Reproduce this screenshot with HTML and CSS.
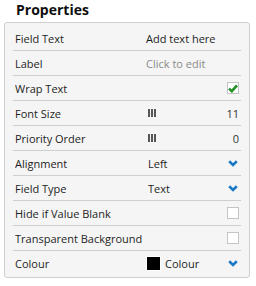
FILE: index.html
```html
<!DOCTYPE html>
<html lang="en">
<head>
    <meta charset="UTF-8" />
    <title>Properties</title>
    <link rel="stylesheet" href="styles.css">
</head>
<body>

<h2 class="title">Properties</h2>

<div class="panel">
    <div class="row">
        <span class="label">Field Text</span>
        <span class="value">Add text here</span>
    </div>
    <div class="row">
        <span class="label">Label</span>
        <span class="value muted">Click to edit</span>
    </div>
    <div class="row">
        <span class="label">Wrap Text</span>
        <span class="value end">
            <span class="check on">
                <svg width="10" height="9" viewBox="0 0 10 9"><path d="M1 4.6 L3.8 7.2 L9 1.4" fill="none" stroke="#239123" stroke-width="2.6"/></svg>
            </span>
        </span>
    </div>
    <div class="row">
        <span class="label">Font Size</span>
        <span class="value split"><span class="grip"><i></i><i></i><i></i></span><span class="num">11</span></span>
    </div>
    <div class="row">
        <span class="label">Priority Order</span>
        <span class="value split"><span class="grip"><i></i><i></i><i></i></span><span class="num">0</span></span>
    </div>
    <div class="row">
        <span class="label">Alignment</span>
        <span class="value split"><span class="sel">Left</span>
            <svg class="chev" width="10" height="7" viewBox="0 0 10 7"><path d="M1.2 1.3 L5 5 L8.8 1.3" fill="none" stroke="#1b78c4" stroke-width="2.6"/></svg>
        </span>
    </div>
    <div class="row">
        <span class="label">Field Type</span>
        <span class="value split"><span class="sel">Text</span>
            <svg class="chev" width="10" height="7" viewBox="0 0 10 7"><path d="M1.2 1.3 L5 5 L8.8 1.3" fill="none" stroke="#1b78c4" stroke-width="2.6"/></svg>
        </span>
    </div>
    <div class="row">
        <span class="label">Hide if Value Blank</span>
        <span class="value end"><span class="check"></span></span>
    </div>
    <div class="row">
        <span class="label">Transparent Background</span>
        <span class="value end"><span class="check"></span></span>
    </div>
    <div class="row">
        <span class="label">Colour</span>
        <span class="value split"><span class="colour"><span class="swatch"></span>Colour</span>
            <svg class="chev" width="10" height="7" viewBox="0 0 10 7"><path d="M1.2 1.3 L5 5 L8.8 1.3" fill="none" stroke="#1b78c4" stroke-width="2.6"/></svg>
        </span>
    </div>
</div>

</body>
</html>
```

FILE: styles.css
```css
body {
    margin: 0;
    background: #fff;
    font-family: 'Open Sans', sans-serif;
    color: #1e1e1e;
}

.title {
    margin: 0;
    padding: 0 0 0 16px;
    height: 22px;
    line-height: 19px;
    font-size: 14px;
    font-weight: 700;
    color: #0e0e0e;
}

.panel {
    margin-left: 4px;
    width: 228px;
    padding: 3px 8px 2px 8px;
    background: #f5f5f5;
    border: 1px solid #cfcfcf;
    border-radius: 3px;
}

.row {
    display: flex;
    align-items: center;
    height: 24px;
    padding: 0 2px;
    border-bottom: 1px solid #cfcfcf;
    font-size: 11px;
}

.row:last-child {
    border-bottom: none;
}

.label {
    width: 131px;
    flex-shrink: 0;
    white-space: nowrap;
    overflow: hidden;
}

.value {
    flex: 1;
    display: flex;
    align-items: center;
    white-space: nowrap;
}

.muted {
    color: #8a8a8a;
}

.end {
    justify-content: flex-end;
}

.split {
    justify-content: space-between;
}

.check {
    width: 10px;
    height: 10px;
    border: 1px solid #c4c4c4;
    background: #fff;
    display: flex;
    align-items: center;
    justify-content: center;
}

.grip {
    display: flex;
    gap: 1px;
    margin-left: 2px;
}

.grip i {
    display: block;
    width: 2px;
    height: 8px;
    background: #555;
}

.num {
    color: #333;
}

.sel {
    margin-left: 2px;
}

.chev {
    margin-right: 1px;
}

.colour {
    display: flex;
    align-items: center;
}

.swatch {
    width: 13px;
    height: 13px;
    background: #000;
    border: 1px solid #fff;
    margin-right: 4px;
}
```
